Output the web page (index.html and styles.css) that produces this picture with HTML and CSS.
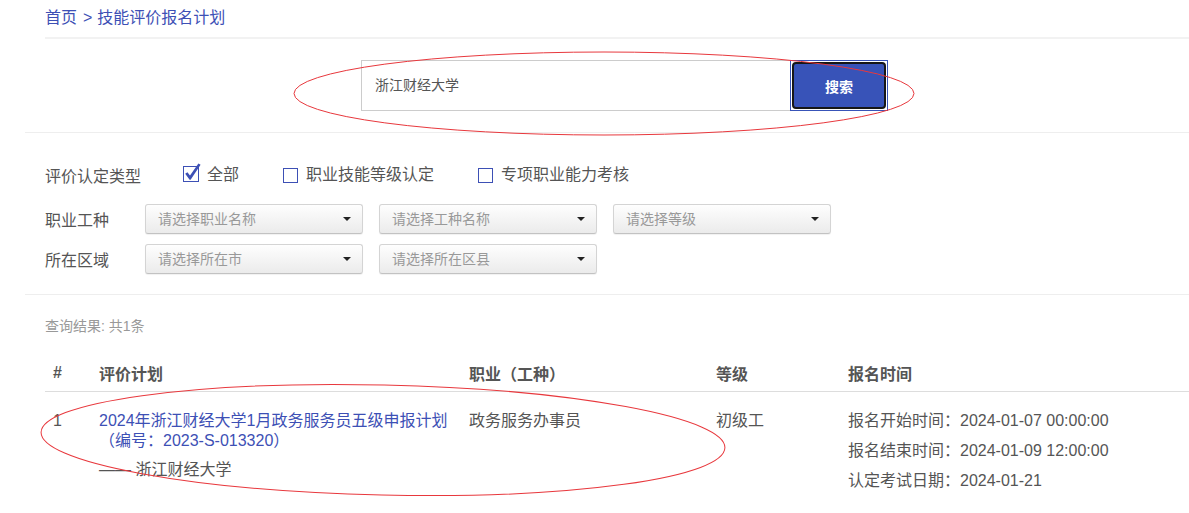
FILE: index.html
```html
<!DOCTYPE html>
<html lang="zh-CN">

<head>
    <meta charset="UTF-8">
    <meta name="viewport" content="width=device-width, initial-scale=1.0">
    <title>技能评价报名计划</title>
    <link rel="stylesheet" href="styles.css">
</head>

<body>
    <div class="page">
        <!-- breadcrumb -->
        <div class="crumb">
            <a href="#">首页</a><span class="sep">&gt;</span><a href="#">技能评价报名计划</a>
        </div>

        <!-- search bar -->
        <div class="search">
            <div class="searchBox">
                <div class="searchInput">浙江财经大学</div>
                <button class="searchBtn"><span>搜索</span></button>
            </div>
        </div>

        <!-- filters -->
        <div class="filters">
            <div class="typeRow">
                <span class="rowLabel">评价认定类型</span>
                <label class="opt">
                    <svg class="ck" width="18" height="20" viewBox="0 0 18 20">
                        <rect x="0.5" y="3.5" width="15" height="15" fill="#fff" stroke="#3d50b5" />
                        <path d="M2.2 10.8 L4.4 9.2 L7 12.6 L15.4 0.4 L17.6 1.8 L7.6 16.8 L6.6 16.8 Z" fill="#3d50b5" />
                    </svg>
                    全部
                </label>
                <label class="opt"><span class="box"></span>职业技能等级认定</label>
                <label class="opt"><span class="box"></span>专项职业能力考核</label>
            </div>
            <div class="selRow">
                <span class="rowLabel">职业工种</span>
                <div class="sel">请选择职业名称</div>
                <div class="sel">请选择工种名称</div>
                <div class="sel">请选择等级</div>
            </div>
            <div class="selRow">
                <span class="rowLabel">所在区域</span>
                <div class="sel">请选择所在市</div>
                <div class="sel">请选择所在区县</div>
            </div>
        </div>

        <!-- results -->
        <div class="results">
            <div class="count">查询结果: 共1条</div>
            <table class="plans">
                <thead>
                    <tr>
                        <th class="cNo">#</th>
                        <th class="cPlan">评价计划</th>
                        <th class="cJob">职业（工种）</th>
                        <th class="cLevel">等级</th>
                        <th>报名时间</th>
                    </tr>
                </thead>
                <tbody>
                    <tr>
                        <td>1</td>
                        <td>
                            <a href="#">2024年浙江财经大学1月政务服务员五级申报计划<br>（编号：2023-S-013320）</a>
                            <div class="org">—— 浙江财经大学</div>
                        </td>
                        <td>政务服务办事员</td>
                        <td>初级工</td>
                        <td class="times">
                            <div>报名开始时间：2024-01-07 00:00:00</div>
                            <div>报名结束时间：2024-01-09 12:00:00</div>
                            <div>认定考试日期：2024-01-21</div>
                        </td>
                    </tr>
                </tbody>
            </table>
        </div>

        <!-- red marks drawn over the screenshot -->
        <svg class="marks" width="1189" height="513" viewBox="0 0 1189 513">
            <ellipse cx="604" cy="93.5" rx="310" ry="41.5" fill="none" stroke="#e8383d" stroke-width="1" />
            <ellipse cx="383" cy="440" rx="342" ry="55" fill="none" stroke="#e8383d" stroke-width="1" transform="rotate(1.3 383 440)" />
        </svg>
    </div>
</body>

</html>
```

FILE: styles.css
```css
* {
    padding: 0;
    margin: 0;
    box-sizing: border-box;
}

body {
    background: #fff;
    font-family: "Liberation Sans", "Noto Sans CJK SC", sans-serif;
    color: #555;
    font-size: 16px;
}

a {
    color: #3d50b5;
    text-decoration: none;
}

.page {
    position: relative;
    width: 1189px;
    min-height: 513px;
    overflow: hidden;
}

/* breadcrumb */
.crumb {
    margin-left: 45px;
    height: 39px;
    line-height: 36px;
    border-bottom: 2px solid #f2f2f2;
    color: #3d50b5;
}

.crumb .sep {
    margin: 0 5px 0 6px;
}

/* search */
.search {
    margin-left: 25px;
    padding: 21px 0 21px 336px;
    border-bottom: 1px solid #eee;
}

.searchBox {
    display: flex;
    height: 51px;
}

.searchInput {
    width: 429px;
    height: 51px;
    border: 1px solid #ccc;
    border-right: none;
    padding-left: 13px;
    line-height: 49px;
    font-size: 14px;
    color: #555;
}

.searchBtn {
    width: 98px;
    height: 51px;
    padding: 1px;
    background: #fff;
    border: 1px solid #3853b8;
    font-family: inherit;
}

.searchBtn span {
    display: flex;
    height: 100%;
    align-items: center;
    justify-content: center;
    background: #3853b8;
    border: 2px solid #161616;
    border-radius: 4px;
    color: #fff;
    font-size: 14px;
    font-weight: 700;
}

/* filters */
.filters {
    margin-left: 25px;
    padding: 27px 0 20px 20px;
    border-bottom: 1px solid #eee;
}

.typeRow,
.selRow {
    display: flex;
    align-items: center;
    height: 30px;
}

.typeRow {
    margin-bottom: 14px;
}

.selRow+.selRow {
    margin-top: 10px;
}

.typeRow .rowLabel {
    margin-right: 42px;
}

.selRow .rowLabel {
    width: 100px;
}

.opt {
    display: flex;
    align-items: center;
    margin-right: 44px;
    line-height: 20px;
}

.opt .ck {
    margin-right: 6px;
    margin-top: -4px;
}

.opt .box {
    width: 15px;
    height: 15px;
    border: 1px solid #3d50b5;
    margin-right: 8px;
}

.sel {
    position: relative;
    width: 218px;
    height: 30px;
    margin-right: 16px;
    padding-left: 12px;
    line-height: 28px;
    font-size: 14px;
    color: #999;
    border: 1px solid #d4d4d4;
    border-bottom-color: #c2c2c2;
    border-radius: 3px;
    background: linear-gradient(#fefefe, #ebebeb);
    box-shadow: 0 1px 1px rgba(0, 0, 0, 0.06);
}

.sel::after {
    content: "";
    position: absolute;
    right: 11px;
    top: 12px;
    border-left: 4px solid transparent;
    border-right: 4px solid transparent;
    border-top: 4px solid #222;
}

/* results */
.results {
    margin-left: 25px;
    padding: 21px 0 0 20px;
}

.count {
    font-size: 14px;
    line-height: 20px;
    color: #999;
    margin-bottom: 19px;
}

.plans {
    width: 100%;
    border-collapse: collapse;
}

.plans th {
    height: 36px;
    padding: 0 8px;
    text-align: left;
    font-weight: 700;
    color: #555;
    border-bottom: 1px solid #ddd;
}

.plans .cNo {
    width: 46px;
}

.plans .cPlan {
    width: 370px;
}

.plans .cJob {
    width: 247px;
}

.plans .cLevel {
    width: 132px;
}

.plans td {
    vertical-align: top;
    padding: 19px 8px 0;
    line-height: 20px;
}

.plans .org {
    margin-top: 9px;
}

.plans td.times {
    padding-top: 14px;
    line-height: 30px;
}

.marks {
    position: absolute;
    top: 0;
    left: 0;
    pointer-events: none;
}
```
